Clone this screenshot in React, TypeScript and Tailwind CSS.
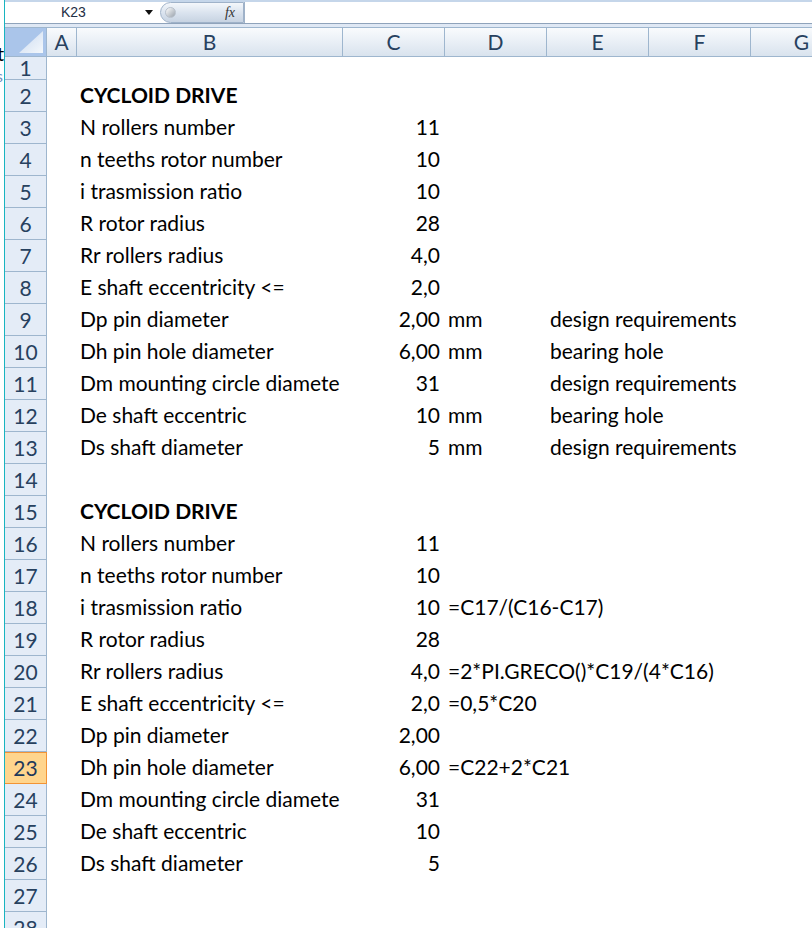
import React from "react";

type Row = { n: number; b?: string; c?: string; d?: string; e?: string; bold?: boolean };

const ROWS: Row[] = [
  { n: 2, b: "CYCLOID DRIVE", bold: true },
  { n: 3, b: "N rollers number", c: "11" },
  { n: 4, b: "n teeths rotor number", c: "10" },
  { n: 5, b: "i trasmission ratio", c: "10" },
  { n: 6, b: "R rotor radius", c: "28" },
  { n: 7, b: "Rr rollers radius", c: "4,0" },
  { n: 8, b: "E shaft eccentricity <=", c: "2,0" },
  { n: 9, b: "Dp pin diameter", c: "2,00", d: "mm", e: "design requirements" },
  { n: 10, b: "Dh pin hole diameter", c: "6,00", d: "mm", e: "bearing hole" },
  { n: 11, b: "Dm mounting circle diamete", c: "31", e: "design requirements" },
  { n: 12, b: "De shaft eccentric", c: "10", d: "mm", e: "bearing hole" },
  { n: 13, b: "Ds shaft diameter", c: "5", d: "mm", e: "design requirements" },
  { n: 14 },
  { n: 15, b: "CYCLOID DRIVE", bold: true },
  { n: 16, b: "N rollers number", c: "11" },
  { n: 17, b: "n teeths rotor number", c: "10" },
  { n: 18, b: "i trasmission ratio", c: "10", d: "=C17/(C16-C17)" },
  { n: 19, b: "R rotor radius", c: "28" },
  { n: 20, b: "Rr rollers radius", c: "4,0", d: "=2*PI.GRECO()*C19/(4*C16)" },
  { n: 21, b: "E shaft eccentricity <=", c: "2,0", d: "=0,5*C20" },
  { n: 22, b: "Dp pin diameter", c: "2,00" },
  { n: 23, b: "Dh pin hole diameter", c: "6,00", d: "=C22+2*C21" },
  { n: 24, b: "Dm mounting circle diamete", c: "31" },
  { n: 25, b: "De shaft eccentric", c: "10" },
  { n: 26, b: "Ds shaft diameter", c: "5" },
  { n: 27 },
  { n: 28 },
];

const COLS = [
  { l: "A", w: "w-[30px]" },
  { l: "B", w: "w-[266px]" },
  { l: "C", w: "w-[102px]" },
  { l: "D", w: "w-[102px]" },
  { l: "E", w: "w-[102px]" },
  { l: "F", w: "w-[102px]" },
  { l: "G", w: "w-[102px]" },
];

function RowHead({ n, active, h }: { n: number; active?: boolean; h: string }) {
  return (
    <div
      className={`${h} w-[42px] shrink-0 flex items-center justify-center border-b border-r text-[21px] ${
        active
          ? "bg-[#ffd58d] border-[#f29436] border-t border-t-[#f29436] text-[#1e395b]"
          : "bg-[#e4ecf7] border-[#9eb6ce] text-[#27415f]"
      }`}
    >
      {n}
    </div>
  );
}

export default function App() {
  return (
    <div
      className="w-[812px] h-[928px] overflow-hidden bg-white flex text-[21px] text-black"
      style={{ fontFamily: "Lato, 'Open Sans', sans-serif" }}
    >
      {/* window behind, cut off at the left */}
      <div className="w-[4px] shrink-0 overflow-hidden relative">
        <span className="absolute left-[-3px] top-[38px] text-[20px]">t</span>
        <span className="absolute left-[-4px] top-[64px] text-[16px] text-[#6a8fc0]">s</span>
      </div>
      <div className="w-[1px] shrink-0 bg-[#18b4c0]" />

      <div className="flex-1 flex flex-col min-w-0">
        {/* formula bar */}
        <div className="h-[24px] shrink-0 flex border-t-2 border-[#c5d6ea] border-b border-b-[#8fa3bb] text-[14px]">
          <div className="w-[155px] shrink-0 flex items-center relative">
            <span className="ml-[56px] text-[#1e2f45]" style={{ fontFamily: "'Liberation Sans', sans-serif" }}>
              K23
            </span>
            <span className="absolute left-[140px] top-[8px] w-0 h-0 border-l-[4px] border-r-[4px] border-t-[5px] border-l-transparent border-r-transparent border-t-[#111]" />
          </div>
          <div className="w-[84px] shrink-0 rounded-l-full bg-gradient-to-b from-[#f4f7fb] via-[#dbe4ef] to-[#c7d3e2] border border-[#9fb2c9] flex items-center justify-between pl-[4px] pr-[8px]">
            <span className="w-[11px] h-[11px] rounded-full bg-gradient-to-br from-[#ffffff] to-[#9aa3ad] border border-[#b8c1cc]" />
            <span className="italic text-[14px] text-[#333]" style={{ fontFamily: "'Liberation Serif', serif" }}>
              fx
            </span>
          </div>
          <div className="flex-1 border-l border-[#9fb2c9]" />
        </div>
        <div className="h-[3px] shrink-0 bg-[#dfe8f4]" />

        {/* column headers */}
        <div className="h-[30px] shrink-0 flex border-y border-[#9eb6ce] bg-gradient-to-b from-[#f9fbfd] to-[#d9e3ee] text-[#27415f]">
          <div className="w-[42px] shrink-0 bg-[#aac5ea] border-r border-[#9eb6ce] relative overflow-hidden">
            <div
              className="absolute right-[3px] bottom-[3px] w-[24px] h-[22px] bg-gradient-to-br from-[#c9d9ef] to-[#f4f8fc]"
              style={{ clipPath: "polygon(100% 0, 100% 100%, 0 100%)" }}
            />
          </div>
          {COLS.map((c) => (
            <div
              key={c.l}
              className={`${c.w} shrink-0 flex items-center justify-center border-r border-[#9eb6ce]`}
            >
              {c.l}
            </div>
          ))}
        </div>

        {/* row 1 */}
        <div className="flex shrink-0">
          <RowHead n={1} h="h-[23px]" />
        </div>

        {ROWS.map((r) => (
          <div key={r.n} className="flex shrink-0 h-[32px] leading-[30px]">
            <RowHead n={r.n} active={r.n === 23} h="h-[32px]" />
            <div className="w-[30px] shrink-0" />
            <div
              className={`w-[266px] shrink-0 pl-[3px] whitespace-nowrap overflow-hidden ${
                r.bold ? "font-bold" : ""
              }`}
            >
              {r.b}
            </div>
            <div className="w-[102px] shrink-0 pr-[5px] text-right whitespace-nowrap">{r.c}</div>
            <div className="w-[102px] shrink-0 pl-[3px] whitespace-nowrap overflow-visible">{r.d}</div>
            <div className="w-[102px] shrink-0 pl-[3px] whitespace-nowrap overflow-visible">{r.e}</div>
          </div>
        ))}
      </div>
    </div>
  );
}
